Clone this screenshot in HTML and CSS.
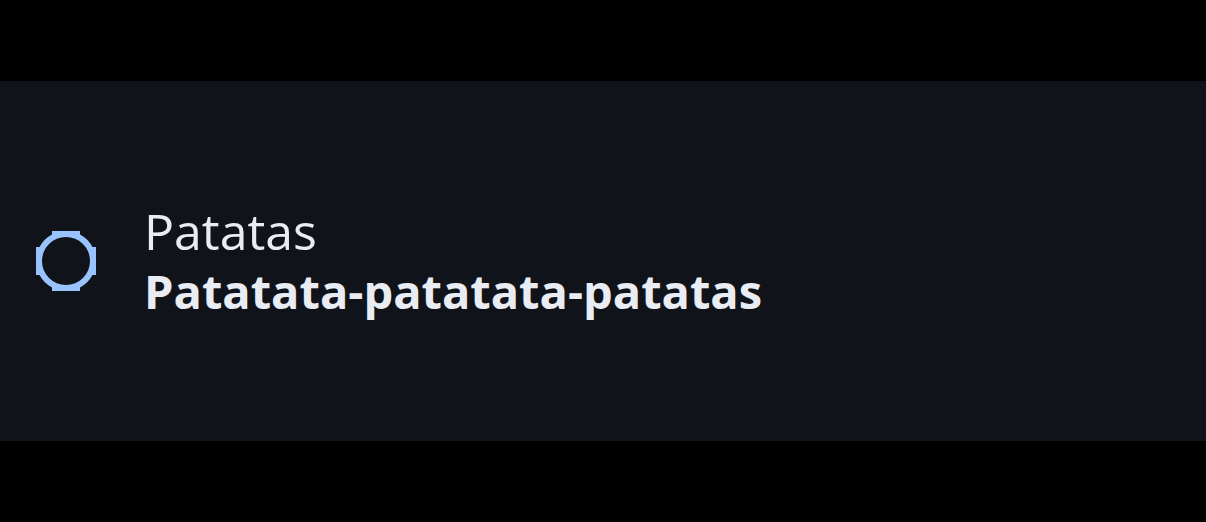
FILE: index.html
```html
<!DOCTYPE html>
<html lang="en">
<head>
<meta charset="utf-8">
<meta name="viewport" content="width=device-width, initial-scale=1">
<title>Patatas</title>
<link rel="stylesheet" href="styles.css">
</head>
<body>
<main class="item">
  <svg class="item-icon" viewBox="0 0 60 60" aria-hidden="true">
    <path fill="#99c3ff" fill-rule="evenodd" d="M16 0H44V3.5A30 30 0 0 1 56.5 16H60V44H56.5A30 30 0 0 1 44 56.5V60H16V56.5A30 30 0 0 1 3.5 44H0V16H3.5A30 30 0 0 1 16 3.5ZM30 6A24 24 0 1 0 30 54A24 24 0 1 0 30 6Z"/>
  </svg>
  <div class="item-text">
    <p class="item-label">Patatas</p>
    <p class="item-title">Patatata-patatata-patatas</p>
  </div>
</main>
</body>
</html>
```
FILE: styles.css
```css
body {
  margin: 0;
  padding: 81px 0;
  background: #000;
  color: #e9ecf2;
  font-family: "Open Sans", "Noto Sans", sans-serif;
}

.item {
  display: flex;
  align-items: center;
  gap: 48px;
  padding: 120px 36px;
  background: #10131a;
}

.item-icon {
  flex: none;
  width: 60px;
  height: 60px;
}

.item-text {
  min-width: 0;
  white-space: nowrap;
}

.item-label,
.item-title {
  margin: 0;
  line-height: 60px;
}

.item-label {
  font-size: 50px;
  font-weight: 400;
}

.item-title {
  font-size: 47px;
  font-weight: 700;
}
```
